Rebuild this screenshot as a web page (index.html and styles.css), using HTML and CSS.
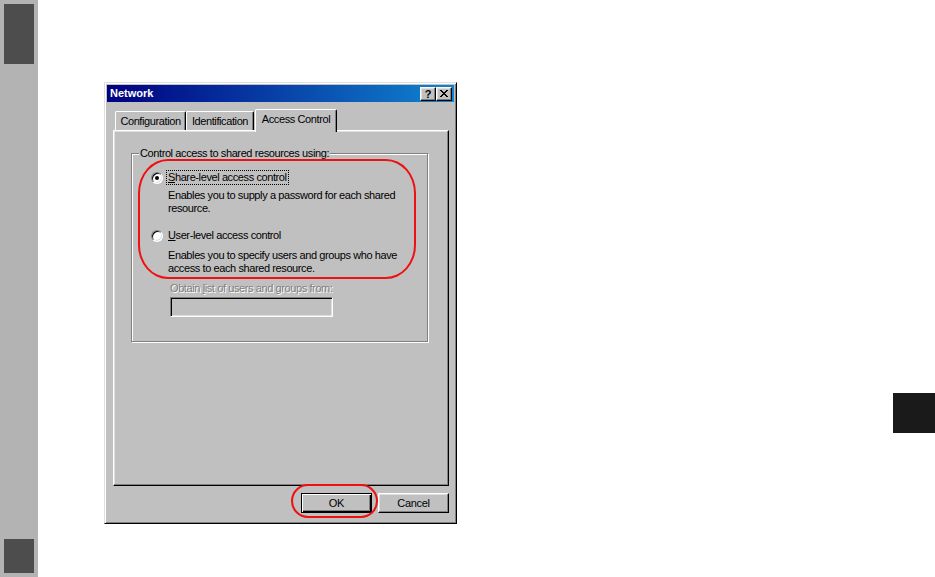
FILE: index.html
```html
<!DOCTYPE html>
<html lang="en">
<head>
<meta charset="utf-8">
<title>Network</title>
<link rel="stylesheet" href="styles.css">
</head>
<body>
<div class="page">
  <aside class="sidebar">
    <div class="side-block side-top"></div>
    <div class="side-block side-bottom"></div>
  </aside>
  <main class="stage">
    <div class="dialog">
      <div class="titlebar">
        <span class="title">Network</span>
        <div class="caption-buttons">
          <span class="cap-btn cap-help">?</span>
          <span class="cap-btn cap-close">
            <svg width="8" height="7" viewBox="0 0 8 7"><path d="M0 0h2v1h-2zM6 0h2v1h-2zM1 1h2v1h-2zM5 1h2v1h-2zM2 2h4v1h-4zM3 3h2v1h-2zM2 4h4v1h-4zM1 5h2v1h-2zM5 5h2v1h-2zM0 6h2v1h-2zM6 6h2v1h-2z" fill="#000"/></svg>
          </span>
        </div>
      </div>
      <div class="tabstrip">
        <div class="tab tab-config">Configuration</div>
        <div class="tab tab-ident">Identification</div>
        <div class="tab tab-access active">Access Control</div>
      </div>
      <div class="panel">
        <div class="groupbox">
          <span class="group-label">Control access to shared resources using:</span>
          <div class="group-body">
            <div class="option">
              <span class="radio checked"><span class="dot"></span></span>
              <span class="option-label focused"><u>S</u>hare-level access control</span>
            </div>
            <p class="desc desc-first">Enables you to supply a password for each shared<br>resource.</p>
            <div class="option option-second">
              <span class="radio"></span>
              <span class="option-label"><u>U</u>ser-level access control</span>
            </div>
            <p class="desc desc-second">Enables you to specify users and groups who have<br>access to each shared resource.</p>
            <p class="disabled-label">Obtain <u>l</u>ist of users and groups from:</p>
            <div class="textbox"></div>
          </div>
          <div class="annot-box"></div>
        </div>
      </div>
      <div class="button-row">
        <div class="ok-wrap">
          <span class="btn btn-default">OK</span>
          <div class="annot-pill"></div>
        </div>
        <span class="btn">Cancel</span>
      </div>
    </div>
  </main>
  <div class="corner-block"></div>
</div>
</body>
</html>
```

FILE: styles.css
```css
* { box-sizing: border-box; }
html, body {
  margin: 0;
  padding: 0;
  background: #ffffff;
}
body {
  font-family: "Liberation Sans", Arial, sans-serif;
  font-size: 11px;
  color: #000;
}
.page {
  display: flex;
  width: 935px;
  height: 577px;
  overflow: hidden;
}
.sidebar {
  width: 38px;
  flex: none;
  background: #b3b3b3;
  display: flex;
  flex-direction: column;
  justify-content: space-between;
  padding: 4px;
}
.side-block {
  background: #4d4d4d;
  width: 30px;
}
.side-top { height: 60px; }
.side-bottom { height: 34px; }

.stage {
  flex: 1;
  padding: 82px 0 0 66px;
}
.corner-block {
  flex: none;
  width: 42px;
  height: 40px;
  margin-top: 393px;
  background: #1a1a1a;
}

/* dialog window */
.dialog {
  width: 353px;
  height: 442px;
  background: #c0c0c0;
  border: 1px solid;
  border-color: #dfdfdf #000 #000 #dfdfdf;
  box-shadow: inset 1px 1px 0 #fff, inset -1px -1px 0 #808080;
  padding: 2px;
  display: flex;
  flex-direction: column;
}
.titlebar {
  height: 17px;
  flex: none;
  background: linear-gradient(to right, #000080, #1084d0);
  display: flex;
  align-items: center;
  justify-content: space-between;
  padding: 0 2px 0 3px;
}
.title {
  color: #fff;
  font-weight: bold;
  font-size: 11px;
  margin-top: -1px;
}
.caption-buttons {
  display: flex;
}
.cap-btn {
  width: 16px;
  height: 14px;
  background: #c0c0c0;
  border: 1px solid;
  border-color: #fff #000 #000 #fff;
  box-shadow: inset -1px -1px 0 #808080, inset 1px 1px 0 #dfdfdf;
  display: flex;
  align-items: center;
  justify-content: center;
  font-weight: bold;
  font-size: 11px;
  line-height: 1;
}
.cap-help { padding-top: 1px; }

/* tabs */
.tabstrip {
  flex: none;
  display: flex;
  align-items: flex-end;
  height: 23px;
  margin: 7px 0 -2px 6px;
  padding-left: 2px;
  position: relative;
  z-index: 1;
}
.tab {
  height: 19px;
  margin-bottom: 2px;
  background: #c0c0c0;
  border-top: 1px solid #fff;
  border-left: 1px solid #fff;
  border-right: 1px solid #000;
  border-top-left-radius: 2px;
  border-top-right-radius: 2px;
  box-shadow: inset -1px 0 0 #808080;
  display: flex;
  align-items: center;
  justify-content: center;
  letter-spacing: -0.4px;
  padding-bottom: 1px;
}
.tab-config { width: 71px; }
.tab-ident { width: 68px; }
.tab-access { width: 82px; margin-left: 1px; }
.tab.active {
  height: 23px;
  margin-bottom: 0;
  padding-bottom: 5px;
}

.panel {
  flex: none;
  height: 356px;
  margin: 0 5px 0 6px;
  border: 1px solid;
  border-color: #fff #000 #000 #fff;
  box-shadow: inset -1px -1px 0 #808080, inset 1px 1px 0 #dfdfdf;
  padding: 22px 20px 0 17px;
}

.groupbox {
  position: relative;
  height: 189px;
  border: 1px solid #808080;
  box-shadow: inset 1px 1px 0 #fff, 1px 1px 0 #fff;
}
.group-label {
  display: block;
  width: fit-content;
  margin: -7px 0 0 7px;
  padding: 0 1px;
  line-height: 13px;
  background: #c0c0c0;
  letter-spacing: -0.4px;
}
.group-body {
  padding: 11px 0 0 19px;
  letter-spacing: -0.4px;
  line-height: 13px;
}
.option {
  display: flex;
  align-items: center;
  height: 13px;
}
.option-second { margin-top: 14px; }
.radio {
  width: 12px;
  height: 12px;
  flex: none;
  border-radius: 50%;
  background: #fff;
  border: 1px solid;
  border-color: #808080 #fff #fff #808080;
  box-shadow: inset 1px 1px 0 #000, inset -1px -1px 0 #dfdfdf;
  display: flex;
  align-items: center;
  justify-content: center;
}
.dot {
  width: 4px;
  height: 4px;
  border-radius: 50%;
  background: #000;
}
.option-label {
  margin-left: 4px;
  padding: 0 1px;
  line-height: 13px;
}
.focused {
  outline: 1px dotted #000;
  outline-offset: 0;
}
.desc {
  margin: 5px 0 0 17px;
}
.desc-second { margin-top: 7px; }
.disabled-label {
  margin: 7px 0 0 19px;
  color: #808080;
  text-shadow: 1px 1px 0 #fff;
}
.textbox {
  margin: 2px 0 0 19px;
  width: 163px;
  height: 20px;
  background: #c0c0c0;
  border: 1px solid;
  border-color: #808080 #fff #fff #808080;
  box-shadow: inset 1px 1px 0 #000, inset -1px -1px 0 #dfdfdf;
}
.annot-box {
  position: absolute;
  left: 6px;
  top: 5px;
  width: 278px;
  height: 120px;
  border: 2px solid #ee1111;
  border-radius: 30px / 34px;
  pointer-events: none;
}

.button-row {
  flex: none;
  display: flex;
  justify-content: flex-end;
  gap: 6px;
  margin-top: 7px;
  padding-right: 5px;
}
.ok-wrap {
  position: relative;
}
.btn {
  width: 71px;
  height: 20px;
  display: flex;
  align-items: center;
  justify-content: center;
  background: #c0c0c0;
  border: 1px solid;
  border-color: #fff #000 #000 #fff;
  box-shadow: inset -1px -1px 0 #808080, inset 1px 1px 0 #dfdfdf;
  letter-spacing: -0.3px;
}
.btn-default {
  border: 1px solid #000;
  box-shadow: inset 1px 1px 0 #fff, inset -1px -1px 0 #000, inset -2px -2px 0 #808080;
}
.annot-pill {
  position: absolute;
  left: -10px;
  top: -9px;
  width: 87px;
  height: 34px;
  border: 2px solid #ee1111;
  border-radius: 17px;
}
```
